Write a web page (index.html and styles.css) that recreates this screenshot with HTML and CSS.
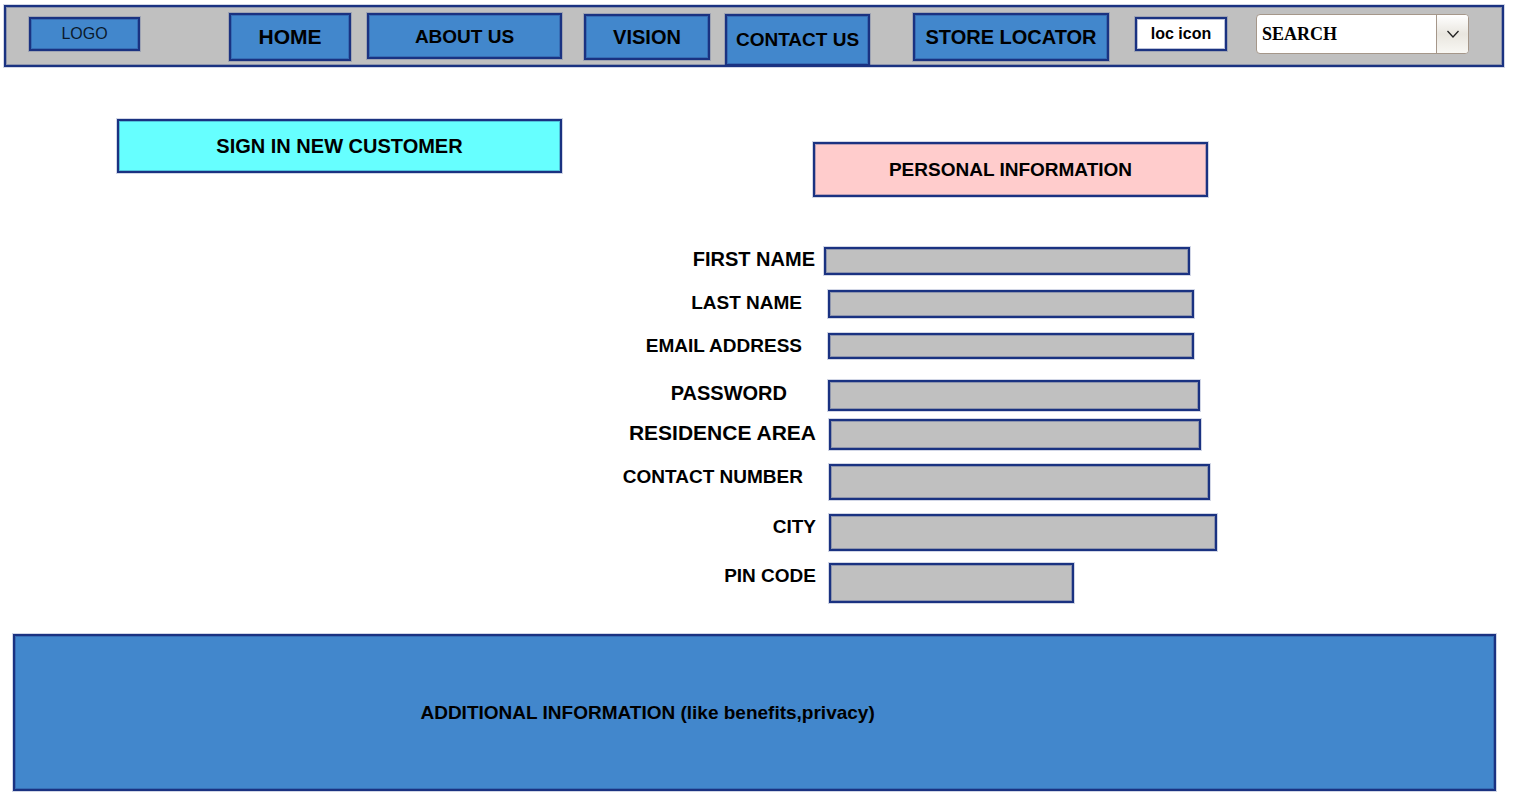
FILE: index.html
```html
<!DOCTYPE html>
<html lang="en">
<head>
<meta charset="utf-8">
<meta name="viewport" content="width=device-width, initial-scale=1">
<title>Sign in new customer</title>
<link rel="stylesheet" href="styles.css">
</head>
<body>
<header class="topbar box">
  <a class="logo box" href="#">LOGO</a>
  <a class="home box" href="#">HOME</a>
  <a class="about box" href="#">ABOUT US</a>
  <a class="vision box" href="#">VISION</a>
  <a class="contact box" href="#">CONTACT US</a>
  <a class="store box" href="#">STORE LOCATOR</a>
  <button class="loc box" type="button">loc icon</button>
  <div class="search">
    <select class="search-select" aria-label="Search"><option>SEARCH</option></select>
    <span class="search-arrow"><svg width="12" height="8" viewBox="0 0 12 8" fill="none" stroke="#222" stroke-width="1.3"><path d="M0.5 1 L6 7 L11.5 1"/></svg></span>
  </div>
</header>
<main>
  <div class="titles">
    <button class="signin box" type="button">SIGN IN NEW CUSTOMER</button>
    <h1 class="personal box">PERSONAL INFORMATION</h1>
  </div>
  <form class="form">
    <div class="row first"><label for="first">FIRST NAME</label><input class="box" id="first" type="text"></div>
    <div class="row last"><label for="last">LAST NAME</label><input class="box" id="last" type="text"></div>
    <div class="row email"><label for="email">EMAIL ADDRESS</label><input class="box" id="email" type="email"></div>
    <div class="row password"><label for="password">PASSWORD</label><input class="box" id="password" type="password"></div>
    <div class="row area"><label for="area">RESIDENCE AREA</label><input class="box" id="area" type="text"></div>
    <div class="row phone"><label for="phone">CONTACT NUMBER</label><input class="box" id="phone" type="tel"></div>
    <div class="row city"><label for="city">CITY</label><input class="box" id="city" type="text"></div>
    <div class="row pin"><label for="pin">PIN CODE</label><input class="box" id="pin" type="text"></div>
  </form>
</main>
<footer class="extra box">ADDITIONAL INFORMATION (like benefits,privacy)</footer>
</body>
</html>
```

FILE: styles.css
```css
* { box-sizing: border-box; }

body {
  margin: 0;
  padding-top: 5px;
  background: #fff;
  color: #000;
  font: bold 19px/24px "Liberation Sans", Arial, sans-serif;
}

.box {
  border: 2px solid #1a3281;
  border-radius: 0;
  background: #4287cc;
  color: #000;
  box-shadow: inset 0 0 0 1px rgba(26, 50, 129, 0.3), 0 0 0 1px rgba(26, 50, 129, 0.2);
}

a, button {
  padding: 0;
  font: inherit;
  text-align: center;
  text-decoration: none;
  white-space: nowrap;
}

/* Header bar: proportional columns, with the spacers between the items */
.topbar {
  display: grid;
  grid-template-columns: 23fr 111fr 89fr 122fr 16fr 195fr 22fr 126fr 15fr 145fr 43fr 196fr 26fr 92fr 29fr 213fr 33fr;
  align-items: start;
  height: 62px;
  margin: 0 26px 0 4px;
  padding-top: 6px;
  background: #c0c0c0;
}

.topbar > * { grid-row: 1; min-width: 0; }

.logo {
  grid-column: 2;
  margin-top: 4px;
  color: #0a1a2c;
  font-size: 16px;
  font-weight: normal;
  line-height: 30px;
}
.home { grid-column: 4; font-size: 21px; line-height: 44px; }
.about { grid-column: 6; padding-top: 1px; line-height: 41px; }
.vision { grid-column: 8; margin-top: 1px; font-size: 20px; line-height: 42px; }
.contact { grid-column: 10; margin-top: 1px; line-height: 48px; }
.store { grid-column: 12; font-size: 20px; line-height: 44px; }
.loc { grid-column: 14; margin-top: 4px; background: #fff; font-size: 16px; line-height: 30px; }

.search { grid-column: 16; position: relative; margin-top: 1px; }

.search-select {
  display: block;
  width: 100%;
  height: 40px;
  padding: 0 32px 0 5px;
  appearance: none;
  border: 1px solid #a5978a;
  border-radius: 4px;
  background: #fff;
  color: #000;
  font: bold 18px/24px "Liberation Serif", "Times New Roman", serif;
}

.search-arrow {
  position: absolute;
  top: 1px;
  right: 1px;
  bottom: 1px;
  display: flex;
  align-items: center;
  justify-content: center;
  width: 32px;
  border-left: 1px solid #a5978a;
  border-radius: 0 3px 3px 0;
  background: linear-gradient(#fff, #e9e6df 50%, #f8f7f3);
  pointer-events: none;
}

.titles {
  display: grid;
  grid-template-columns: 117fr 445fr 251fr 395fr 322fr;
  align-items: start;
  margin-top: 52px;
}

.signin {
  grid-column: 2;
  background: #66ffff;
  font-size: 20px;
  line-height: 50px;
}

.personal {
  grid-column: 4;
  margin: 23px 0 0;
  background: #ffcccc;
  font-size: 19px;
  line-height: 51px;
  text-align: center;
}

/* Form rows: label column, field column, free space */
.form { margin-top: 50px; }

.row {
  display: grid;
  grid-template-columns: 829fr 372fr 329fr;
  align-items: start;
  margin-bottom: 14px;
  line-height: 26px;
}

.row label { padding-right: 13px; text-align: right; white-space: nowrap; }
.row input { width: 100%; min-width: 0; height: 28px; padding: 0 8px; background: #c0c0c0; font: inherit; }

.first { grid-template-columns: 824fr 366fr 340fr; margin-bottom: 15px; font-size: 20px; line-height: 24px; }
.first label { padding-right: 9px; }
.last, .email { grid-template-columns: 828fr 366fr 336fr; }
.last { margin-bottom: 15px; }
.last label, .email label, .phone label { padding-right: 26px; }
.email { margin-bottom: 21px; }
.email input { height: 26px; }
.password { grid-template-columns: 828fr 372fr 330fr; margin-bottom: 8px; font-size: 20px; }
.password label { padding-right: 41px; }
.password input, .area input { height: 31px; }
.area { font-size: 21px; line-height: 28px; }
.phone { grid-template-columns: 829fr 381fr 320fr; }
.phone input { height: 36px; }
.city { grid-template-columns: 829fr 388fr 313fr; margin-bottom: 12px; }
.city input { height: 37px; }
.pin { grid-template-columns: 829fr 245fr 456fr; margin-bottom: 0; }
.pin input { height: 40px; }

.extra {
  margin: 31px 34px 9px 13px;
  padding: 65px 0 64px 26.5%;
}
```
